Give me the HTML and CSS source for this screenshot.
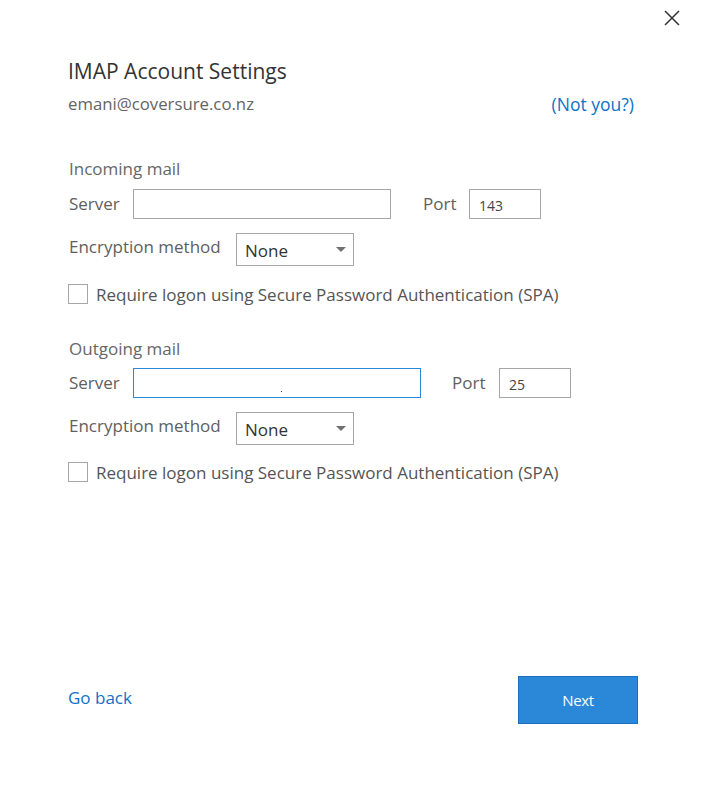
FILE: index.html
```html
<!DOCTYPE html>
<html>
<head>
<meta charset="utf-8">
<link rel="stylesheet" href="styles.css">
</head>
<body>
<div class="dialog">
  <div class="topbar">
    <button class="close" aria-label="Close">
      <svg width="16" height="16" viewBox="0 0 16 16"><path d="M1 1 L15 15 M15 1 L1 15" stroke="#333" stroke-width="1.5" fill="none"/></svg>
    </button>
  </div>
  <div class="content">
    <h1 class="title">IMAP Account Settings</h1>
    <div class="account-row">
      <span class="email">emani@coversure.co.nz</span>
      <a class="link notyou" href="#">(Not you?)</a>
    </div>

    <section class="group group-in">
      <div class="group-title">Incoming mail</div>
      <div class="row server-row">
        <span class="label lbl-server">Server</span>
        <div class="input server-in"></div>
        <span class="label lbl-port">Port</span>
        <div class="input port">143</div>
      </div>
      <div class="row enc-row">
        <span class="label lbl-enc">Encryption method</span>
        <div class="select"><span>None</span><span class="caret"></span></div>
      </div>
      <div class="row check-row">
        <span class="checkbox"></span>
        <span class="check-text">Require logon using Secure Password Authentication (SPA)</span>
      </div>
    </section>

    <section class="group group-out">
      <div class="group-title">Outgoing mail</div>
      <div class="row server-row server-row-out">
        <span class="label lbl-server">Server</span>
        <div class="input server-out focused"><span class="dot"></span></div>
        <span class="label lbl-port lbl-port-out">Port</span>
        <div class="input port">25</div>
      </div>
      <div class="row enc-row">
        <span class="label lbl-enc">Encryption method</span>
        <div class="select"><span>None</span><span class="caret"></span></div>
      </div>
      <div class="row check-row check-row-out">
        <span class="checkbox"></span>
        <span class="check-text">Require logon using Secure Password Authentication (SPA)</span>
      </div>
    </section>
  </div>
  <div class="footer">
    <a class="link goback" href="#">Go back</a>
    <button class="next">Next</button>
  </div>
</div>
</body>
</html>
```
FILE: styles.css
```css
* { box-sizing: border-box; }
html, body { margin: 0; padding: 0; background: #fff; }
body {
  width: 707px;
  height: 793px;
  font-family: "Open Sans", "Noto Sans", sans-serif;
  color: #5f5f5f;
}
.dialog {
  width: 707px;
  height: 793px;
  display: flex;
  flex-direction: column;
}
.topbar {
  height: 36px;
  display: flex;
  justify-content: flex-end;
  padding: 10px 27px 0 0;
}
.close {
  width: 16px;
  height: 16px;
  padding: 0;
  border: 0;
  background: none;
  display: block;
}
.close svg { display: block; }
.content {
  padding: 0 73px 0 68px;
}
.title {
  margin: 21px 0 0;
  font-size: 21px;
  font-weight: 400;
  line-height: 28px;
  color: #333;
}
.account-row {
  display: flex;
  justify-content: space-between;
  align-items: center;
  margin-top: 7px;
  font-size: 16.75px;
  line-height: 24px;
}
.email { color: #646464; }
.link { color: #0f72c6; text-decoration: none; }
.notyou { font-size: 17.5px; }

.group { padding-left: 1px; }
.group-in { margin-top: 41px; }
.group-out { margin-top: 32px; }
.group-title {
  font-size: 17px;
  line-height: 24px;
  color: #666;
}
.row { display: flex; align-items: center; }
.label {
  font-size: 17px;
  color: #606060;
}
.server-row { margin-top: 8px; height: 30px; }
.server-row-out { margin-top: 7px; }
.lbl-server { width: 64px; margin-top: -2px; }
.input {
  height: 30px;
  border: 1px solid #a6a6a6;
  background: #fff;
  font-size: 14px;
  color: #444;
  display: flex;
  align-items: center;
  padding: 2px 0 0 9px;
}
.server-in { width: 258px; }
.server-out { width: 288px; position: relative; }
.focused { border-color: #2b88d8; }
.dot {
  position: absolute;
  left: 147px;
  top: 22px;
  width: 1px;
  height: 1px;
  background: #333;
}
.lbl-port { margin-left: 32px; width: 46px; margin-top: -2px; }
.lbl-port-out { margin-left: 31px; width: 47px; }
.port { width: 72px; }

.enc-row { margin-top: 14px; height: 33px; }
.lbl-enc { width: 167px; margin-top: -6px; }
.select {
  width: 118px;
  height: 33px;
  border: 1px solid #a6a6a6;
  display: flex;
  align-items: center;
  justify-content: space-between;
  padding: 2px 7px 0 8px;
  font-size: 17px;
  color: #333;
}
.caret {
  width: 0;
  height: 0;
  border-left: 5.5px solid transparent;
  border-right: 5.5px solid transparent;
  border-top: 5px solid #707070;
  margin-top: -3px;
}
.check-row { margin-top: 17px; height: 22px; margin-left: -1px; }
.check-row-out { margin-top: 16px; }
.checkbox {
  width: 20px;
  height: 20px;
  border: 1px solid #a6a6a6;
  background: #fff;
  flex: none;
}
.check-text {
  margin-left: 8px;
  font-size: 17px;
  color: #555;
}

.footer {
  margin-top: auto;
  height: 117px;
  display: flex;
  justify-content: space-between;
  align-items: flex-start;
  padding: 0 69px 0 68px;
}
.goback {
  font-size: 17px;
  margin-top: 10px;
}
.next {
  width: 120px;
  height: 48px;
  background: #2b88d8;
  border: 1px solid #1b6fc0;
  color: #fff;
  font-family: "Open Sans", "Noto Sans", sans-serif;
  font-size: 15px;
  letter-spacing: -0.3px;
  padding: 0;
}
```
